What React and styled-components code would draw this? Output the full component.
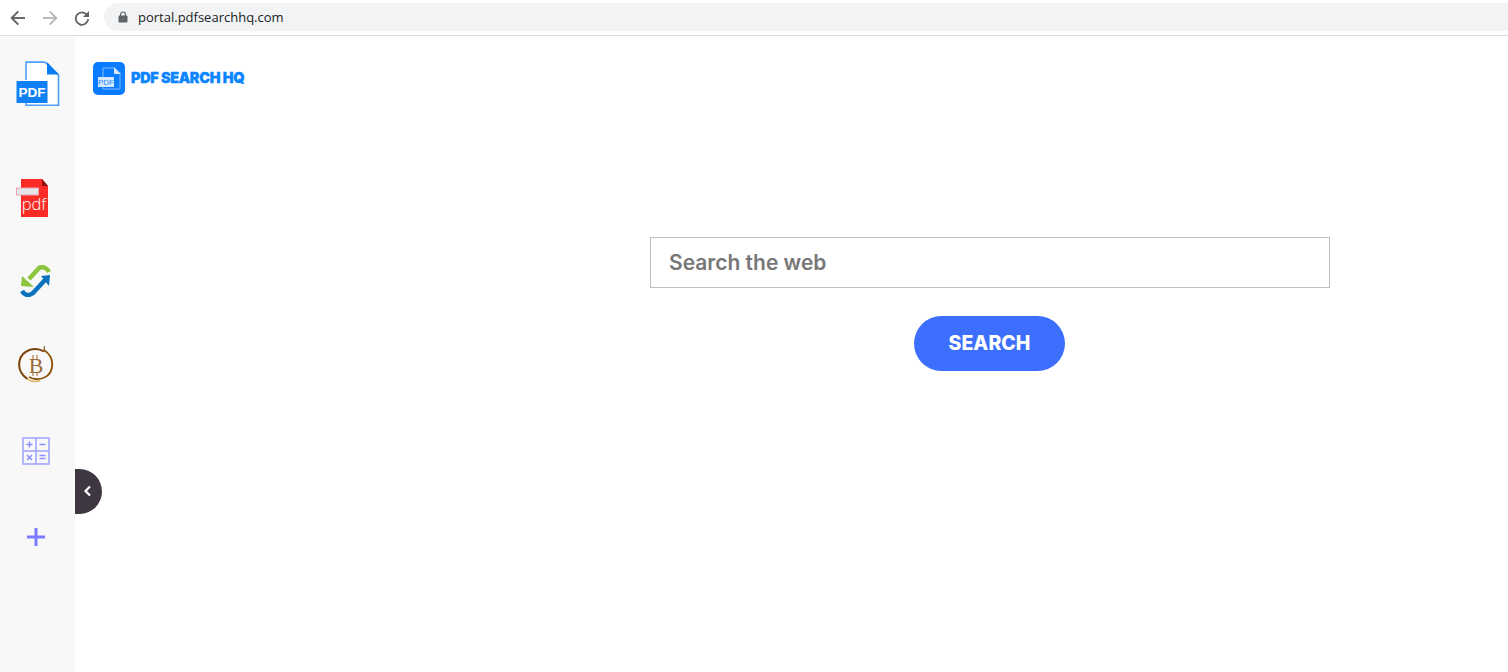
import React from "react";
import styled, { createGlobalStyle } from "styled-components";

const GlobalStyle = createGlobalStyle`
  html, body {
    margin: 0;
    padding: 0;
    background: #fff;
  }
  body {
    font-family: "Inter", "Liberation Sans", sans-serif;
  }
`;

const BackIcon = ({ color }) => (
  <svg width="16" height="16" viewBox="0 0 16 16" fill="none" stroke={color} strokeWidth="1.9">
    <path d="M15 8H2" />
    <path d="M8.3 1.4L1.7 8l6.6 6.6" />
  </svg>
);

const ForwardIcon = ({ color }) => (
  <svg width="16" height="16" viewBox="0 0 16 16" fill="none" stroke={color} strokeWidth="1.9">
    <path d="M1 8h13" />
    <path d="M7.7 1.4L14.3 8l-6.6 6.6" />
  </svg>
);

const ReloadIcon = () => (
  <svg width="16" height="16" viewBox="0 0 16 16" fill="none">
    <path d="M13.2 5.2A6.2 6.2 0 1 0 14.2 9" stroke="#5f6368" strokeWidth="1.8" />
    <path d="M15 1v6H9z" fill="#5f6368" />
  </svg>
);

const LockIcon = () => (
  <svg width="10" height="12" viewBox="0 0 10 12">
    <path d="M2.6 5V3.4a2.4 2.4 0 0 1 4.8 0V5" fill="none" stroke="#5f6368" strokeWidth="1.2" />
    <rect x="0.5" y="4.6" width="9" height="7" rx="1" fill="#5f6368" />
  </svg>
);

const PdfFileIcon = () => (
  <svg width="44" height="46" viewBox="0 0 44 46">
    <path d="M10 1.2h19l13.5 13v30H10V35" fill="#fff" stroke="#4d9fff" strokeWidth="1.6" />
    <path d="M10 19V1.2h19" fill="none" stroke="#4d9fff" strokeWidth="1.6" />
    <path d="M31 1l12 12.5H31z" fill="#0a7cf0" />
    <rect x="0.5" y="20" width="31" height="22" fill="#1080f5" />
    <text x="16" y="36" textAnchor="middle" fontFamily="Liberation Sans" fontWeight="700" fontSize="13.5" fill="#fff">PDF</text>
  </svg>
);

const RedPdfIcon = () => (
  <svg width="32" height="38" viewBox="0 0 32 38">
    <path d="M5 0h21l6 7v31H5z" fill="#fb2c25" />
    <path d="M26 0l6 7h-6z" fill="#8f0f0a" />
    <rect x="0.5" y="9" width="22" height="7" fill="#e6e6e8" stroke="#e7a3ab" />
    <text x="18" y="31" textAnchor="middle" fontFamily="Open Sans" fontWeight="300" fontSize="16.5" fill="#fff">pdf</text>
  </svg>
);

const ArrowsIcon = () => (
  <svg width="32" height="32" viewBox="0 0 32 32" fill="none">
    <path d="M29 7C27 3 23 1 19 3L9 14" stroke="#8cc63f" strokeWidth="4.5" />
    <path d="M1 21l1-10 12 11z" fill="#8cc63f" />
    <path d="M2 26C5 31 9 31 13 28L25 15" stroke="#0b72bd" strokeWidth="4.5" />
    <path d="M21 11l9-1-1 11z" fill="#0b72bd" />
  </svg>
);

const BitcoinIcon = () => (
  <svg width="36" height="38" viewBox="0 0 36 38" fill="none">
    <path d="M26 5.5C17 0 4 4 1.5 15c-1.5 8 2 14 8 18" stroke="#7a4208" strokeWidth="2" />
    <path d="M26 4c6 4 9 10 8 17-1 8-8 13-17 12-2 0-4-1-6-2" stroke="#8c5208" strokeWidth="1.8" />
    <path d="M9 33c4 3 10 3 13 1.500" stroke="#d8b25a" strokeWidth="1.4" />
    <path d="M26 5l0.500-5" stroke="#7a4208" />
    <text x="18" y="27" textAnchor="middle" fontFamily="Liberation Serif" fontSize="22" fill="#9a6a34">B</text>
    <path d="M15 9v4M19 9v4M15 26v4M19 26v4" stroke="#9a6a34" />
  </svg>
);

const CalculatorIcon = () => (
  <svg width="28" height="28" viewBox="0 0 28 28" fill="none" stroke="#9da1ff" strokeWidth="1.5">
    <rect x="1" y="1" width="26" height="26" />
    <path d="M14 1v26M1 14h26" />
    <path d="M4.500 7.500h6M7.500 4.500v6M17.500 7.500h6M17.500 18.500h6M17.500 21.500h6M5 18l5 5M10 18l-5 5" stroke="#8a8fff" />
  </svg>
);

const PlusIcon = () => (
  <svg width="18" height="18" viewBox="0 0 18 18">
    <path d="M9 0v18M0 9h18" stroke="#7a7cff" strokeWidth="3" />
  </svg>
);

const LogoIcon = () => (
  <svg width="32" height="33" viewBox="0 0 32 33">
    <rect width="32" height="33" rx="5" fill="#0a7cff" />
    <path d="M10 6h11l6 6v15H10z" fill="none" stroke="#7dbbff" strokeWidth="1" />
    <path d="M21 5l7 7h-7z" fill="#d5e8ff" />
    <rect x="5" y="15" width="16" height="10" fill="#d5e8ff" />
    <text x="13" y="23" textAnchor="middle" fontFamily="Liberation Sans" fontSize="8" fill="#2d8dff">PDF</text>
  </svg>
);

const ChevronIcon = () => (
  <svg width="9" height="12" viewBox="0 0 9 12" fill="none">
    <path d="M7 1.500L2.500 6 7 10.500" stroke="#fff" strokeWidth="2.200" />
  </svg>
);

const sideItems = [
  { Icon: RedPdfIcon, height: 84, nudge: 8 },
  { Icon: ArrowsIcon, height: 82, nudge: 0 },
  { Icon: BitcoinIcon, height: 86, nudge: 0 },
  { Icon: CalculatorIcon, height: 86, nudge: 0 },
  { Icon: PlusIcon, height: 86, nudge: 0 },
];

const App = () => {
  return (
    <Page>
      <GlobalStyle />
      <BrowserBar>
        <NavButtons>
          <BackIcon color="#5f6368" />
          <ForwardIcon color="#b4b6b9" />
          <ReloadIcon />
        </NavButtons>
        <AddressBar>
          <LockIcon />
          <Url>portal.pdfsearchhq.com</Url>
        </AddressBar>
      </BrowserBar>
      <Body>
        <Sidebar>
          <SideLogo>
            <PdfFileIcon />
          </SideLogo>
          {sideItems.map(({ Icon, height, nudge }, i) => (
            <SideItem key={i} $height={height} $nudge={nudge}>
              <Icon />
            </SideItem>
          ))}
          <CollapseTab>
            <ChevronIcon />
          </CollapseTab>
        </Sidebar>
        <Main>
          <Logo>
            <LogoIcon />
            <LogoText>PDF SEARCH HQ</LogoText>
          </Logo>
          <SearchForm>
            <SearchInput placeholder="Search the web" />
            <SearchButton type="button">SEARCH</SearchButton>
          </SearchForm>
        </Main>
      </Body>
    </Page>
  );
};

const Page = styled.div`
  display: flex;
  flex-direction: column;
  height: 672px;
  overflow: hidden;
`;

const BrowserBar = styled.div`
  display: flex;
  align-items: center;
  flex: none;
  height: 35px;
  box-sizing: content-box;
  border-bottom: 1px solid #dcdcdc;
  padding-left: 10px;
`;

const NavButtons = styled.div`
  display: flex;
  align-items: center;
  gap: 16px;
  margin-right: 14px;
`;

const AddressBar = styled.div`
  display: flex;
  align-items: center;
  gap: 10px;
  flex: 1;
  height: 28px;
  margin-top: -1px;
  padding-left: 14px;
  border-radius: 14px 0 0 14px;
  background: #f1f3f4;
`;

const Url = styled.span`
  font-family: "Open Sans", "Liberation Sans", sans-serif;
  font-size: 13px;
  color: #202124;
`;

const Body = styled.div`
  display: flex;
  flex: 1;
`;

const Sidebar = styled.aside`
  position: relative;
  display: flex;
  flex-direction: column;
  align-items: center;
  flex: none;
  width: 75px;
  padding-top: 25px;
  background: #f8f8f8;
  box-sizing: border-box;
`;

const SideLogo = styled.div`
  display: flex;
  height: 50px;
  margin-bottom: 45px;
`;

const SideItem = styled.div`
  display: flex;
  align-items: center;
  justify-content: center;
  height: ${(p) => p.$height}px;
  margin-left: -4px;
  margin-right: ${(p) => p.$nudge}px;
`;

const CollapseTab = styled.button`
  position: absolute;
  top: 433px;
  left: 75px;
  display: flex;
  align-items: center;
  justify-content: center;
  width: 27px;
  height: 45px;
  padding: 0 2px 2px 0;
  border: none;
  border-radius: 0 23px 23px 0;
  background: #3e3641;
`;

const Main = styled.main`
  flex: 1;
  padding: 26px 0 0 18px;
`;

const Logo = styled.div`
  display: flex;
  align-items: center;
  gap: 6px;
  margin-bottom: 142px;
`;

const LogoText = styled.span`
  margin-top: -2px;
  font-family: "Inter", "Liberation Sans", sans-serif;
  font-size: 14.4px;
  font-weight: 900;
  letter-spacing: -0.3px;
  color: #0a84ff;
  -webkit-text-stroke: 0.3px #0a84ff;
`;

const SearchForm = styled.form`
  display: flex;
  flex-direction: column;
  align-items: center;
  gap: 28px;
  width: 680px;
  margin-left: 557px;
`;

const SearchInput = styled.input`
  width: 100%;
  height: 51px;
  box-sizing: border-box;
  padding: 0 18px;
  border: 1px solid #bfbfbf;
  outline: none;
  font-family: "Inter", "Liberation Sans", sans-serif;
  font-size: 21px;
  font-weight: 600;
  color: #777;

  &::placeholder {
    color: #777;
    opacity: 1;
  }
`;

const SearchButton = styled.button`
  width: 151px;
  height: 55px;
  margin-right: 1px;
  padding: 0 0 2px;
  border: none;
  border-radius: 28px;
  background: #3d6fff;
  font-family: "Inter", "Liberation Sans", sans-serif;
  font-size: 19.5px;
  font-weight: 800;
  color: #fff;
`;

export default App;
